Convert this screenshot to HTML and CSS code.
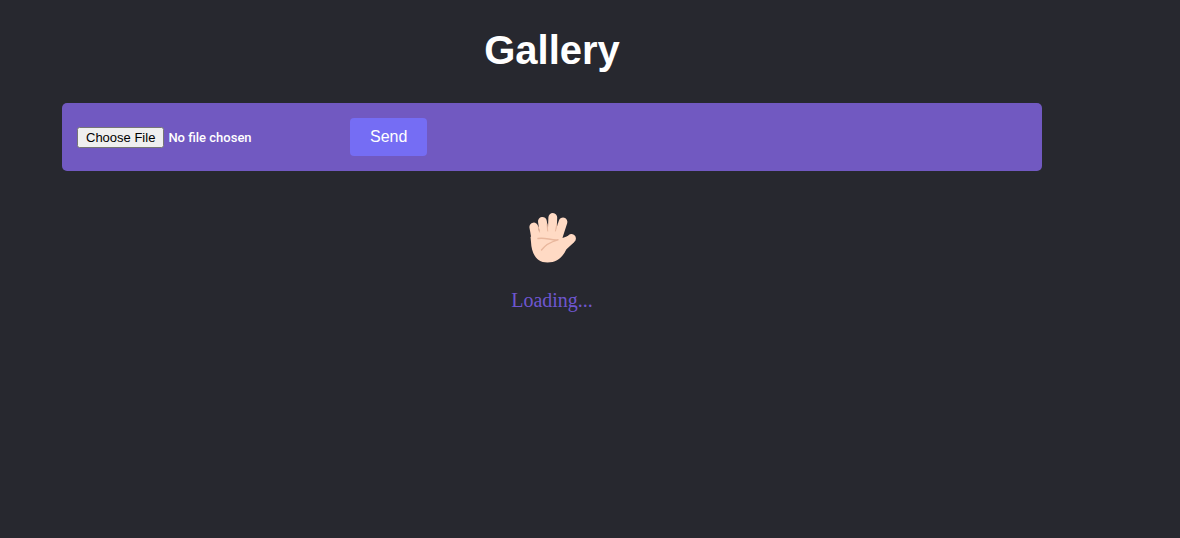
FILE: index.html
```html
<!DOCTYPE html>
<html lang="en">
<head>
<meta charset="utf-8">
<meta name="viewport" content="width=device-width, initial-scale=1">
<title>Gallery</title>
<link rel="stylesheet" href="styles.css">
</head>
<body>
<main class="container">
  <div class="area">
    <h1 class="header">Gallery</h1>
    <form class="upload-form">
      <input class="upload-file" type="file" name="image" aria-label="Image">
      <button class="upload-send" type="submit">Send</button>
    </form>
    <div class="screen-warning" role="status">
      <svg class="hand" viewBox="0 0 50 52" aria-hidden="true">
        <g fill="none" stroke="#ffdac4" stroke-linecap="round" stroke-width="8.8">
          <path d="M6.8 16 9.500 31"/>
          <path d="M15.400 10.400 18 28"/>
          <path d="M25.800 6.400 25 27"/>
          <path d="M36 11 30.500 28"/>
          <path d="M44.500 27.500 33 38"/>
        </g>
        <path fill="#ffdac4" d="M3.500 26 8 20 28.500 19 35 21C34.500 24 34.500 26 35.500 27L41 25 47 31 39.500 38C36 46 30 51.500 20.500 51.500 9 51.500 4.500 42 4 31Z"/>
        <g fill="none" stroke="#e9b79d" stroke-linecap="round" stroke-linejoin="round">
          <path stroke-width="1" d="M11.300 16 12.500 21M20 13 20.700 20M29.800 13 28.500 20"/>
          <path stroke-width="1.4" d="M11 27.500C18 26 24 29.500 31 28.800 25 30.500 18 34 14.500 39"/>
        </g>
      </svg>
      <p class="loading">Loading...</p>
    </div>
  </div>
</main>
</body>
</html>
```
FILE: styles.css
```css
* {
  box-sizing: border-box;
  margin: 0;
}

body {
  min-height: 100vh;
  background: #27282f;
  color: #fff;
}

.container {
  padding: 30px 76px 30px 0;
}

.area {
  max-width: 980px;
  margin: 0 auto;
}

.header {
  margin-bottom: 32px;
  font: bold 40px/41px "Liberation Sans", Arial, sans-serif;
  text-align: center;
}

.upload-form {
  display: flex;
  align-items: center;
  gap: 20px;
  margin-bottom: 40px;
  padding: 15px;
  border-radius: 5px;
  background: #7159c1;
}

.upload-file {
  width: 253px;
  color: #fff;
  font: 500 13px Roboto, sans-serif;
}

.upload-file::file-selector-button {
  padding: 1px 7px;
  font: 13px/15px "Liberation Sans", Arial, sans-serif;
}

.upload-send {
  padding: 10px 20px;
  border: 0;
  border-radius: 4px;
  background: #756df4;
  color: #fff;
  font: 16px/18px "Liberation Sans", Arial, sans-serif;
}

.screen-warning {
  display: flex;
  flex-direction: column;
  align-items: center;
  gap: 25px;
  color: #6e56cf;
}

.hand {
  width: 50px;
  height: 52px;
}

.loading {
  font: 20px/24px "Liberation Serif", "Times New Roman", serif;
}
```
